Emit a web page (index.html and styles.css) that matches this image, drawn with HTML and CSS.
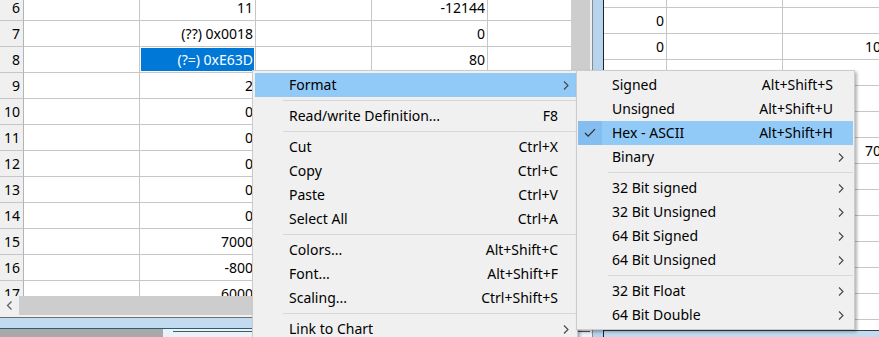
FILE: index.html
```html
<!doctype html>
<html lang="en">
	<head>
		<meta charset="utf-8">
		<title>Watch table - context menu</title>
		<link rel="stylesheet" href="styles.css">
	</head>
	<body>
		<div class="screen">
			<div class="left-pane">
				<div class="sheet">
					<div class="grid left-grid">
						<div class="row"><div class="cell head">6</div><div class="cell"></div><div class="cell">11</div><div class="cell"></div><div class="cell">-12144</div><div class="cell last"></div></div>
						<div class="row"><div class="cell head">7</div><div class="cell"></div><div class="cell">(??) 0x0018</div><div class="cell"></div><div class="cell">0</div><div class="cell last"></div></div>
						<div class="row"><div class="cell head">8</div><div class="cell"></div><div class="cell sel">(?=) 0xE63D</div><div class="cell"></div><div class="cell">80</div><div class="cell last"></div></div>
						<div class="row"><div class="cell head">9</div><div class="cell"></div><div class="cell">2</div><div class="cell"></div><div class="cell"></div><div class="cell last"></div></div>
						<div class="row"><div class="cell head">10</div><div class="cell"></div><div class="cell">0</div><div class="cell"></div><div class="cell"></div><div class="cell last"></div></div>
						<div class="row"><div class="cell head">11</div><div class="cell"></div><div class="cell">0</div><div class="cell"></div><div class="cell"></div><div class="cell last"></div></div>
						<div class="row"><div class="cell head">12</div><div class="cell"></div><div class="cell">0</div><div class="cell"></div><div class="cell"></div><div class="cell last"></div></div>
						<div class="row"><div class="cell head">13</div><div class="cell"></div><div class="cell">0</div><div class="cell"></div><div class="cell"></div><div class="cell last"></div></div>
						<div class="row"><div class="cell head">14</div><div class="cell"></div><div class="cell">0</div><div class="cell"></div><div class="cell"></div><div class="cell last"></div></div>
						<div class="row"><div class="cell head">15</div><div class="cell"></div><div class="cell">7000</div><div class="cell"></div><div class="cell"></div><div class="cell last"></div></div>
						<div class="row"><div class="cell head">16</div><div class="cell"></div><div class="cell">-800</div><div class="cell"></div><div class="cell"></div><div class="cell last"></div></div>
						<div class="row"><div class="cell head">17</div><div class="cell"></div><div class="cell">6000</div><div class="cell"></div><div class="cell"></div><div class="cell last"></div></div>
					</div>
					<div class="vscroll"></div>
				</div>
				<div class="hscroll">
					<div class="hs-btn">
						<svg width="8" height="9" viewBox="0 0 8 9"><path d="M5.5 0.5 L1.5 4.5 L5.5 8.5" fill="none" stroke="#606060" stroke-width="1.3"/></svg>
					</div>
					<div class="hs-thumb"></div>
				</div>
				<div class="pane-foot">
					<div class="foot-band"></div>
					<div class="foot-row">
						<div class="foot-grey"></div>
						<div class="foot-rest"><div class="foot-line"></div></div>
					</div>
				</div>
			</div>

			<div class="splitter">
				<div class="split-edge"></div>
				<div class="split-bar"></div>
			</div>

			<div class="right-pane">
				<div class="grid right-grid">
					<div class="row"><div class="cell"></div><div class="cell"></div><div class="cell last"></div></div>
					<div class="row"><div class="cell">0</div><div class="cell"></div><div class="cell last"></div></div>
					<div class="row"><div class="cell">0</div><div class="cell"></div><div class="cell last">1000</div></div>
					<div class="row"><div class="cell"></div><div class="cell"></div><div class="cell last"></div></div>
					<div class="row"><div class="cell"></div><div class="cell"></div><div class="cell last"></div></div>
					<div class="row"><div class="cell"></div><div class="cell"></div><div class="cell last"></div></div>
					<div class="row"><div class="cell"></div><div class="cell"></div><div class="cell last">7000</div></div>
					<div class="row"><div class="cell"></div><div class="cell"></div><div class="cell last"></div></div>
					<div class="row"><div class="cell"></div><div class="cell"></div><div class="cell last"></div></div>
					<div class="row"><div class="cell"></div><div class="cell"></div><div class="cell last"></div></div>
					<div class="row"><div class="cell"></div><div class="cell"></div><div class="cell last"></div></div>
					<div class="row"><div class="cell"></div><div class="cell"></div><div class="cell last"></div></div>
					<div class="row"><div class="cell"></div><div class="cell"></div><div class="cell last"></div></div>
				</div>
				<div class="right-foot"></div>
			</div>

			<!-- context menu -->
			<div class="menu main-menu">
				<div class="item hot"><span>Format</span><svg class="arrow" width="6" height="9" viewBox="0 0 6 9"><path d="M1 0.5 L5 4.5 L1 8.5" fill="none" stroke="#444" stroke-width="1.1"/></svg></div>
				<div class="sep"></div>
				<div class="item"><span>Read/write Definition...</span><span>F8</span></div>
				<div class="sep"></div>
				<div class="item"><span>Cut</span><span>Ctrl+X</span></div>
				<div class="item"><span>Copy</span><span>Ctrl+C</span></div>
				<div class="item"><span>Paste</span><span>Ctrl+V</span></div>
				<div class="item"><span>Select All</span><span>Ctrl+A</span></div>
				<div class="sep"></div>
				<div class="item"><span>Colors...</span><span>Alt+Shift+C</span></div>
				<div class="item"><span>Font...</span><span>Alt+Shift+F</span></div>
				<div class="item"><span>Scaling...</span><span>Ctrl+Shift+S</span></div>
				<div class="sep"></div>
				<div class="item"><span>Link to Chart</span><svg class="arrow" width="6" height="9" viewBox="0 0 6 9"><path d="M1 0.5 L5 4.5 L1 8.5" fill="none" stroke="#444" stroke-width="1.1"/></svg></div>
			</div>

			<!-- Format submenu -->
			<div class="menu sub-menu">
				<div class="item"><span>Signed</span><span>Alt+Shift+S</span></div>
				<div class="item"><span>Unsigned</span><span>Alt+Shift+U</span></div>
				<div class="item hot">
					<span class="check"><svg width="12" height="10" viewBox="0 0 12 10"><path d="M1 5 L4.2 8.2 L11 1.2" fill="none" stroke="#2b2b2b" stroke-width="1.2"/></svg></span>
					<span>Hex - ASCII</span><span>Alt+Shift+H</span>
				</div>
				<div class="item"><span>Binary</span><svg class="arrow" width="6" height="9" viewBox="0 0 6 9"><path d="M1 0.5 L5 4.5 L1 8.5" fill="none" stroke="#444" stroke-width="1.1"/></svg></div>
				<div class="sep"></div>
				<div class="item"><span>32 Bit signed</span><svg class="arrow" width="6" height="9" viewBox="0 0 6 9"><path d="M1 0.5 L5 4.5 L1 8.5" fill="none" stroke="#444" stroke-width="1.1"/></svg></div>
				<div class="item"><span>32 Bit Unsigned</span><svg class="arrow" width="6" height="9" viewBox="0 0 6 9"><path d="M1 0.5 L5 4.5 L1 8.5" fill="none" stroke="#444" stroke-width="1.1"/></svg></div>
				<div class="item"><span>64 Bit Signed</span><svg class="arrow" width="6" height="9" viewBox="0 0 6 9"><path d="M1 0.5 L5 4.5 L1 8.5" fill="none" stroke="#444" stroke-width="1.1"/></svg></div>
				<div class="item"><span>64 Bit Unsigned</span><svg class="arrow" width="6" height="9" viewBox="0 0 6 9"><path d="M1 0.5 L5 4.5 L1 8.5" fill="none" stroke="#444" stroke-width="1.1"/></svg></div>
				<div class="sep"></div>
				<div class="item"><span>32 Bit Float</span><svg class="arrow" width="6" height="9" viewBox="0 0 6 9"><path d="M1 0.5 L5 4.5 L1 8.5" fill="none" stroke="#444" stroke-width="1.1"/></svg></div>
				<div class="item"><span>64 Bit Double</span><svg class="arrow" width="6" height="9" viewBox="0 0 6 9"><path d="M1 0.5 L5 4.5 L1 8.5" fill="none" stroke="#444" stroke-width="1.1"/></svg></div>
			</div>
		</div>
	</body>
</html>
```

FILE: styles.css
```css
body {
	margin: 0;
	font-family: "Noto Sans", "DejaVu Sans", sans-serif;
	font-size: 14px;
	color: #000;
	background: #f0f0f0;
}

.screen {
	position: relative;
	width: 879px;
	height: 337px;
	overflow: hidden;
	display: flex;
}

/* left sheet */
.left-pane { width: 590px; flex-shrink: 0; display: flex; flex-direction: column; }
.sheet { display: flex; height: 296px; }
.grid { overflow: hidden; background: #fff; }
.left-grid { width: 571px; }
.left-grid .row:first-child { margin-top: -5px; }
.vscroll { width: 19px; background: #cdcdcd; }

.row { display: grid; height: 26px; }
.left-grid .row { grid-template-columns: 24px 116px 116px 116px 116px 1fr; }
.right-grid .row { grid-template-columns: 63px 116px 116px; }

.cell {
	box-sizing: border-box;
	border-right: 1px solid #c6c6c6;
	border-bottom: 1px solid #c6c6c6;
	text-align: right;
	padding-right: 2px;
	line-height: 25px;
	white-space: nowrap;
	overflow: hidden;
}
.cell.last { border-right: 0; }
.cell.head { background: #f0f0f0; padding-right: 3px; border-right-color: #b4b4b4; }
.cell.sel { background: #0078d7; color: #fff; box-shadow: inset 0 0 0 1px #fff; }

.hscroll { display: flex; height: 19px; }
.hs-btn { width: 19px; background: #f0f0f0; display: flex; align-items: center; justify-content: center; }
.hs-thumb { flex: 1; background: #cdcdcd; }

.pane-foot { margin-top: 2px; border-top: 1px solid #6e6e6e; flex: 1; display: flex; flex-direction: column; }
.foot-band { height: 10px; background: #c3dbf1; border-bottom: 1px solid #285f78; }
.foot-row { display: flex; flex: 1; }
.foot-grey { width: 163px; background: #a9a9a9; }
.foot-rest { flex: 1; background: #e9f1f9; padding: 2px 0 0 10px; }
.foot-line { height: 1px; background: #555; }

/* splitter between panes */
.splitter { width: 14px; flex-shrink: 0; display: flex; }
.split-edge { width: 2px; background: #f0f0f0; border-right: 1px solid #8a8a8a; }
.split-bar { flex: 1; background: #b7d4ef; border-right: 1px solid #222; }

/* right sheet */
.right-pane { flex: 1; min-width: 0; display: flex; flex-direction: column; }
.right-grid { height: 330px; }
.right-grid .row:first-child { margin-top: -18px; }
.right-foot { flex: 1; background: #c3dbf1; border-top: 1px solid #3c3c3c; }

/* menus */
.menu {
	position: absolute;
	top: 70px;
	box-sizing: border-box;
	background: #f0f0f0;
	border: 1px solid #cccccc;
	box-shadow: 2px 2px 3px rgba(0, 0, 0, 0.3);
}
.main-menu { left: 252px; width: 326px; height: 290px; padding: 2px 1px 2px 2px; }
.sub-menu { left: 576px; width: 279px; padding: 2px 1px; }

.item {
	position: relative;
	display: flex;
	justify-content: space-between;
	height: 24px;
	line-height: 24px;
	padding: 0 18px 0 34px;
	white-space: nowrap;
}
.sub-menu .item { padding: 0 20px 0 34px; }
.item.hot { background: #91c9f7; }
.arrow { position: absolute; right: 7px; top: 8px; }
.sub-menu .arrow { right: 9px; }

.check {
	position: absolute;
	left: 0;
	top: 0;
	width: 24px;
	height: 24px;
	background: #84bdef;
	display: flex;
	align-items: center;
	justify-content: center;
}

.sep { height: 7px; margin-left: 28px; display: flex; align-items: center; }
.sep::before { content: ""; flex: 1; height: 1px; background: #d7d7d7; }
.sub-menu .sep { margin-left: 30px; }
```
